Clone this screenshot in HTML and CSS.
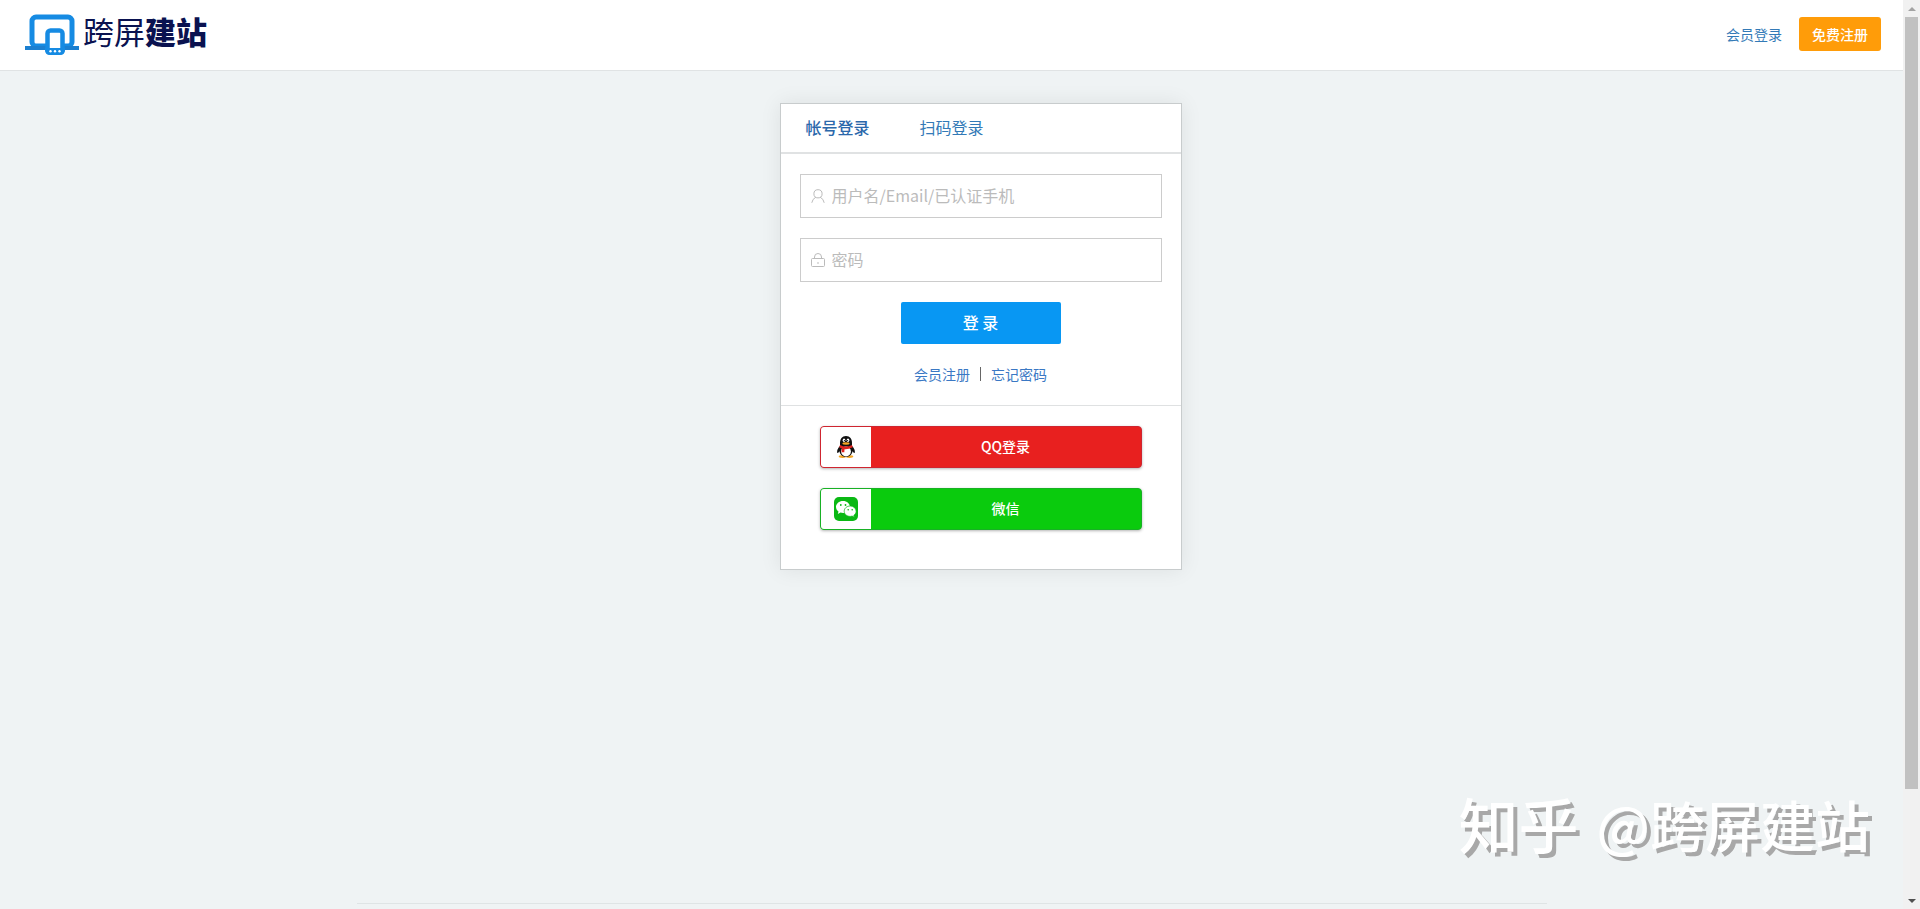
FILE: index.html
```
<!DOCTYPE html>
<html lang="zh-CN">
<head>
    <meta charset="UTF-8">
    <meta name="viewport" content="width=device-width, initial-scale=1.0">
    <title>会员登录 - 跨屏建站</title>
    <link rel="stylesheet" href="styles.css">
</head>
<body>
    <div class="page">
        <header class="header">
            <a href="#" class="logo">
                <svg class="logo-icon" viewBox="0 0 54 41" aria-hidden="true">
                    <rect x="7" y="3" width="40" height="29" rx="4" fill="#fff" stroke="#168be3" stroke-width="5"/>
                    <path d="M0 32h54v4H0z" fill="#1b7fd0"/>
                    <rect x="22.500" y="16.500" width="15" height="22" rx="3" fill="#fff" stroke="#168be3" stroke-width="4.500"/>
                    <path d="M20 34h20v2q0 5-5 5H25q-5 0-5-5z" fill="#168be3"/>
                    <g fill="#fff">
                        <circle cx="25.500" cy="37.200" r="1.200"/>
                        <circle cx="30" cy="37.200" r="1.200"/>
                        <circle cx="34.500" cy="37.200" r="1.200"/>
                    </g>
                </svg>
                <span class="logo-text">跨屏<b>建站</b></span>
            </a>
            <nav class="header-nav">
                <a href="#">会员登录</a>
                <a href="#" class="register-btn">免费注册</a>
            </nav>
        </header>

        <main class="main">
            <section class="login-box">
                <div class="tabs">
                    <a href="#" class="tab active">帐号登录</a>
                    <a href="#" class="tab">扫码登录</a>
                </div>

                <form class="login-form">
                    <label class="field">
                        <svg viewBox="0 0 14 14" aria-hidden="true">
                            <circle cx="7" cy="4.8" r="4.1"/>
                            <path d="M4.8 8.2Q1.5 9.8 .8 13.8M9.2 8.2q3.3 1.6 4 5.6"/>
                        </svg>
                        <input type="text" placeholder="用户名/Email/已认证手机" aria-label="用户名">
                    </label>
                    <label class="field">
                        <svg viewBox="0 0 14 14" aria-hidden="true">
                            <rect x=".5" y="5.5" width="13" height="8" rx="1"/>
                            <path d="M3.5 5.5V4a3.5 3.5 0 0 1 7 0v1.5M7 9v2"/>
                        </svg>
                        <input type="password" placeholder="密码" aria-label="密码">
                    </label>
                    <button type="submit" class="login-btn">登 录</button>
                    <div class="links">
                        <a href="#">会员注册</a>
                        <span class="line"></span>
                        <a href="#">忘记密码</a>
                    </div>
                </form>

                <div class="other-login">
                    <button type="button" class="other-btn qq">
                        <span class="other-icon">
                            <svg viewBox="0 0 24 24" aria-hidden="true">
                                <ellipse cx="8.5" cy="21.6" rx="3.8" ry="1.4" fill="#f5a623"/>
                                <ellipse cx="15.5" cy="21.6" rx="3.8" ry="1.4" fill="#f5a623"/>
                                <path d="M12 1C8 1 6 4 6 8v3c-2 2-3.300 4.500-2.800 6.500.3 1.200 1.500 0 2.300-1.200C6 19.500 8.500 22 12 22s6-2.500 6.500-5.700c.8 1.200 2 2.400 2.300 1.200.5-2-.8-4.500-2.800-6.500V8c0-4-2-7-6-7z" fill="#111"/>
                                <ellipse cx="12" cy="16.500" rx="4.900" ry="5" fill="#fff"/>
                                <ellipse cx="10" cy="5.300" rx="1.300" ry="1.800" fill="#fff"/>
                                <ellipse cx="14" cy="5.300" rx="1.300" ry="1.800" fill="#fff"/>
                                <circle cx="10.400" cy="5.500" r=".6"/>
                                <circle cx="13.600" cy="5.500" r=".6"/>
                                <ellipse cx="12" cy="8.500" rx="3.600" ry="1.200" fill="#f5a623"/>
                                <path d="M6 10q6 3.200 12 0l.8 2.300q-4.300 2.200-8.300 1.900l-.2 3H7.600l.2-3.600-2.600-1.300z" fill="#e0231f"/>
                            </svg>
                        </span>
                        <span class="other-text">QQ登录</span>
                    </button>
                    <button type="button" class="other-btn wechat">
                        <span class="other-icon">
                            <svg viewBox="0 0 24 24" aria-hidden="true">
                                <rect width="24" height="24" rx="5" fill="#0ab814"/>
                                <path d="M9 4c-4 0-7 2.700-7 6 0 1.900 1 3.500 2.500 4.600L3.800 17l2.700-1.400c.8.3 1.600.4 2.500.4 4 0 7-2.700 7-6s-3-6-7-6z" fill="#fff"/>
                                <path d="M16.200 9c-3.400 0-6 2.300-6 5.200s2.600 5.200 6 5.200c.7 0 1.400-.1 2-.3l2.200 1.100-.6-1.900c1.400-1 2.300-2.400 2.300-4.100 0-2.900-2.600-5.200-5.900-5.200z" fill="#fff" stroke="#0ab814" stroke-width=".7"/>
                                <g fill="#0ab814">
                                    <circle cx="6.800" cy="8" r=".9"/>
                                    <circle cx="11.500" cy="8" r=".9"/>
                                    <circle cx="14.200" cy="12.700" r=".8"/>
                                    <circle cx="18.200" cy="12.700" r=".8"/>
                                </g>
                            </svg>
                        </span>
                        <span class="other-text">微信</span>
                    </button>
                </div>
            </section>
        </main>

        <footer class="footer"></footer>
    </div>

    <div class="scrollbar" aria-hidden="true">
        <span class="arrow up"></span>
        <span class="thumb"></span>
        <span class="arrow down"></span>
    </div>

    <div class="watermark">
        <span class="site">知乎</span>
        <span>@跨屏建站</span>
    </div>
</body>
</html>
```
FILE: styles.css
```
* {
    box-sizing: border-box;
}

body {
    margin: 0;
    display: flex;
    height: 100vh;
    overflow: hidden;
    font-family: "Noto Sans CJK SC", sans-serif;
    font-size: 14px;
    line-height: 20px;
    background: #eff3f4;
}

a {
    color: #337ab7;
    text-decoration: none;
}

button,
input {
    font-family: inherit;
}

.page {
    flex: 1;
    display: flex;
    flex-direction: column;
}

/* 顶部 */
.header {
    display: flex;
    justify-content: space-between;
    align-items: center;
    height: 71px;
    padding: 0 22px 2px 25px;
    background: #fff;
    border-bottom: 1px solid #e0e3e4;
}

.logo {
    display: flex;
    align-items: center;
    gap: 4px;
    color: #0a1250;
}

.logo-icon {
    width: 54px;
    height: 41px;
}

.logo-text {
    font-size: 31px;
    line-height: 40px;
    padding-bottom: 6px;
}

.logo-text b {
    font-weight: 900;
}

.header-nav {
    display: flex;
    align-items: center;
    gap: 17px;
}

.register-btn {
    padding: 7px 13px;
    color: #fff;
    font-weight: 500;
    background: #ff9c09;
    border-radius: 3px;
}

/* 登录框 */
.main {
    flex: 1;
    display: flex;
    justify-content: center;
    align-items: flex-start;
    padding: 32px 0 0 58px;
}

.login-box {
    width: 402px;
    background: #fff;
    border: 1px solid #c8cccd;
    box-shadow: 0 0 20px rgba(0, 0, 0, 0.08);
}

.tabs {
    display: flex;
    border-bottom: 2px solid #e0e2e3;
}

.tab {
    padding: 11px 25px 13px;
    font-size: 16px;
    line-height: 24px;
}

.tab.active {
    color: #2b68ab;
    font-weight: 500;
}

.login-form {
    display: flex;
    flex-direction: column;
    gap: 20px;
    padding: 20px 19px 21px;
    border-bottom: 1px solid #dfe1e2;
}

.field {
    display: flex;
    align-items: center;
    gap: 7px;
    height: 44px;
    padding: 0 10px;
    border: 1px solid #ccc;
}

.field svg {
    width: 14px;
    height: 14px;
    fill: none;
    stroke: #bbb;
}

.field input {
    flex: 1;
    min-width: 0;
    padding: 0 0 2px;
    border: none;
    outline: none;
    font-size: 16px;
    line-height: 24px;
    background: none;
}

.field input::placeholder {
    color: #bbb;
}

.login-btn {
    align-self: center;
    width: 160px;
    height: 42px;
    padding: 0 0 2px;
    border: none;
    border-radius: 2px;
    background: #0897f3;
    color: #fff;
    font-size: 16px;
    font-weight: 500;
    cursor: pointer;
}

.links {
    display: flex;
    justify-content: center;
    align-items: center;
    gap: 10px;
}

.links a {
    color: #3a78c4;
}

.line {
    width: 1px;
    height: 14px;
    background: #666;
}

/* 第三方登录 */
.other-login {
    display: flex;
    flex-direction: column;
    gap: 20px;
    padding: 20px 39px 39px;
}

.other-btn {
    display: flex;
    height: 42px;
    padding: 0;
    overflow: hidden;
    border: 1px solid;
    border-radius: 4px;
    box-shadow: 0 1px 3px rgba(0, 0, 0, 0.3);
    color: #fff;
    font-size: 14px;
    font-weight: 500;
    cursor: pointer;
}

.qq {
    background: #e8201f;
    border-color: #cf2530;
}

.wechat {
    background: #0acb0d;
    border-color: #18b125;
}

.other-icon {
    display: flex;
    align-items: center;
    justify-content: center;
    align-self: stretch;
    width: 50px;
    background: #fff;
}

.other-icon svg {
    width: 24px;
    height: 24px;
}

.other-text {
    flex: 1;
    align-self: center;
    padding-bottom: 2px;
}

.footer {
    width: 1190px;
    max-width: 100%;
    height: 6px;
    margin: 0 auto;
    border-top: 1px solid #dfe4e5;
}

/* 滚动条 */
.scrollbar {
    display: flex;
    flex-direction: column;
    align-items: center;
    width: 17px;
    background: #f1f1f1;
}

.thumb {
    flex: 1;
    width: 13px;
    margin-bottom: 104px;
    background: #c1c1c1;
}

.arrow {
    margin: 6px 0;
    border: 4px solid transparent;
}

.arrow.up {
    border-top: 0;
    border-bottom-color: #a3a3a3;
    margin-top: 7px;
}

.arrow.down {
    border-bottom: 0;
    border-top-color: #505050;
}

/* 水印 */
.watermark {
    position: fixed;
    right: 50px;
    bottom: 46px;
    display: flex;
    align-items: center;
    gap: 18px;
    color: #fff;
    font-size: 55px;
    line-height: 80px;
    font-weight: 500;
    text-shadow: 4px 4px 0 #a8a8a8;
}

.watermark .site {
    font-size: 60px;
}
```
